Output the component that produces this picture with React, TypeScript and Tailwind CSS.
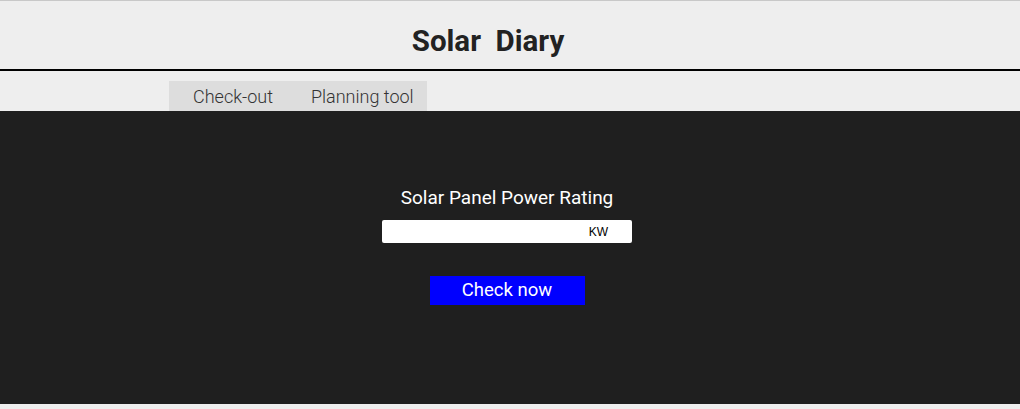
export default function App() {
  return (
    <div className="w-[1020px] h-[409px] bg-[#eeeeee] flex flex-col" style={{ fontFamily: "Roboto, sans-serif" }}>
      <header className="h-[71px] border-t border-[#c8c8c8] border-b-2 border-b-black flex items-center justify-center pr-[44px]">
        <h1 className="text-[29.5px] font-bold text-[#222222] whitespace-pre leading-none mt-[14px]">Solar  Diary</h1>
      </header>
      <div className="h-[40px] pt-[10px] pl-[169px]">
        <nav className="h-[30px] w-[258px] bg-[#dddddd] flex items-center text-[18px] font-light text-[#333333]">
          <span className="pl-[24px]">Check-out</span>
          <span className="pl-[38px]">Planning tool</span>
        </nav>
      </div>
      <main className="h-[293px] bg-[#1f1f1f] flex flex-col items-center pr-[6px]">
        <label className="mt-[76px] text-[19px] text-white leading-[21px]">Solar Panel Power Rating</label>
        <div className="mt-[12px] w-[250px] h-[23px] bg-white rounded-[2px] flex items-center justify-end pr-[24px]">
          <span className="text-[12px] text-black" style={{ fontFamily: "'Liberation Sans', sans-serif" }}>KW</span>
        </div>
        <button className="mt-[33px] w-[155px] h-[29px] bg-[#0000ff] text-white text-[18.5px] leading-none">Check now</button>
      </main>
    </div>
  );
}
